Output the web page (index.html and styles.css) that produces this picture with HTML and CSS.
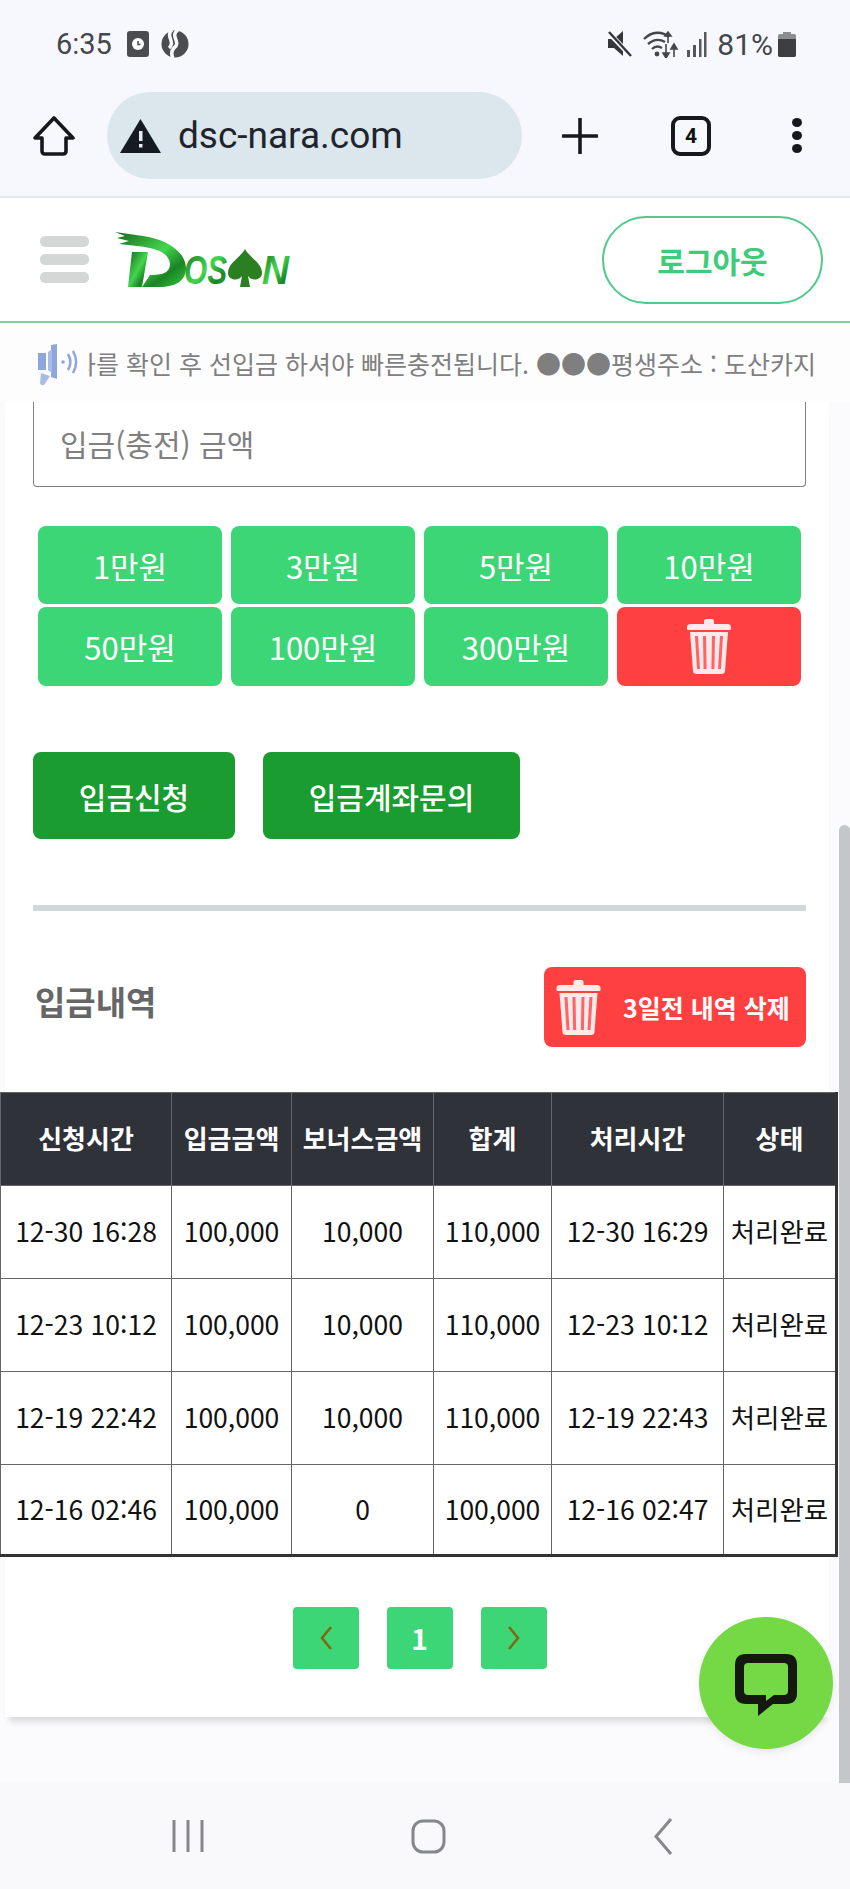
FILE: index.html
```html
<!DOCTYPE html>
<html lang="ko">
<head>
    <meta charset="UTF-8">
    <meta name="viewport" content="width=device-width, initial-scale=1.0">
    <title>입금신청 - DOSAN</title>
    <link rel="stylesheet" href="styles.css">
</head>
<body>
    <svg class="defs" width="0" height="0">
        <defs>
            <symbol id="trash" viewBox="0 0 44 55">
                <path fill="#ffe9e9" d="M17 2q0-2 2-2h6q2 0 2 2v3h13q4 0 4 3v2q0 1-1 1H1q-1 0-1-1V8q0-3 4-3h13z"/>
                <path fill="#ffe9e9" d="M3 13h38l-3 39q0 3-4 3H10q-4 0-4-3z"/>
                <path fill="#ff6365" d="M8 17h3l2 33h-3zM16 17h3l.6 33h-3zM25 17h3l-.6 33h-3zM33 17h3l-2 33h-3z"/>
            </symbol>
            <linearGradient id="logoGreen" x1="0" y1="0" x2="1" y2="1">
                <stop offset="0" stop-color="#17661a"/>
                <stop offset="0.5" stop-color="#43d64e"/>
                <stop offset="0.75" stop-color="#1a8424"/>
                <stop offset="1" stop-color="#35c83f"/>
            </linearGradient>
        </defs>
    </svg>

    <!-- Phone status bar -->
    <div class="status-bar">
        <span class="status-time">6:35</span>
        <svg class="ico-clock" width="22" height="26" viewBox="0 0 22 26"><rect width="22" height="26" rx="3" fill="#4a4c50"/><circle cx="11" cy="13" r="6" fill="#fff"/><path d="M11 10v3.5h2.5" stroke="#4a4c50" stroke-width="1.5" fill="none"/></svg>
        <svg class="ico-s" width="28" height="28" viewBox="0 0 28 28"><circle cx="14" cy="14" r="13.5" fill="#4a4c50"/><path d="M17 0C8 6 21 12 13 18c-3 3-3 6-1 10M11 0C4 6 15 12 8 18" stroke="#f7f8fe" stroke-width="3.5" fill="none"/></svg>
        <span class="status-gap"></span>
        <svg class="ico-mute" width="25" height="28" viewBox="0 0 25 28"><path d="M1 9h6l9-8v25l-9-8H1z" fill="#34363a"/><path d="M2 3l22 23" stroke="#f7f8fe" stroke-width="5"/><path d="M2 2l22 24" stroke="#34363a" stroke-width="2.5"/></svg>
        <svg class="ico-wifi" width="36" height="28" viewBox="0 0 36 28"><g fill="none" stroke="#44464a" stroke-width="2.4"><path d="M1 9c8-8 18-8 25-2"/><path d="M5 14c6-5 12-5 17-2"/><path d="M9 19c3-3 7-3 10-1"/></g><circle cx="14" cy="24" r="2.4" fill="#44464a"/><path d="M25 4v9M25 2l-3 4h6zM31 27v-11M31 14l-3 5h6zM23 14v12M23 28l-3-5h6z" stroke="#44464a" stroke-width="1.6" fill="#44464a"/></svg>
        <svg class="ico-signal" width="21" height="26" viewBox="0 0 21 26"><path d="M1 19h3v7H1zM7 14h3v12H7zM13 8h2.500v18H13zM18 1h2.500v25H18z" fill="#55575a"/></svg>
        <span class="status-batt">81%</span>
        <svg class="ico-batt" width="18" height="25" viewBox="0 0 18 25"><path d="M5 0h8v2h3q2 0 2 2v19q0 2-2 2H2q-2 0-2-2V4q0-2 2-2h3z" fill="#8b8d90"/><path d="M0 7h18v16q0 2-2 2H2q-2 0-2-2z" fill="#3c3e42"/></svg>
    </div>

    <!-- Browser toolbar -->
    <div class="toolbar">
        <svg class="ico-home" width="42" height="40" viewBox="0 0 42 40"><path d="M21 2L40 22h-7v13q0 3-3 3H12q-3 0-3-3V22H2z" fill="none" stroke="#16181d" stroke-width="3.6" stroke-linejoin="round"/></svg>
        <div class="url-bar">
            <svg class="ico-warn" width="41" height="34" viewBox="0 0 41 34"><path d="M20.500 0L41 34H0z" fill="#161a22"/><path d="M19 12h3.500v10H19zM19 25h3.500v3.500H19z" fill="#e6edf2"/></svg>
            <span class="url-text">dsc-nara.com</span>
        </div>
        <svg class="ico-plus" width="36" height="36" viewBox="0 0 36 36"><path d="M18 1v34M1 18h34" stroke="#16181d" stroke-width="3.6" stroke-linecap="round"/></svg>
        <div class="tab-count">4</div>
        <div class="dots"><i></i><i></i><i></i></div>
    </div>

    <!-- Site header -->
    <header class="site-header">
        <div class="burger"><i></i><i></i><i></i></div>
        <svg class="logo" width="176" height="58" viewBox="0 0 176 58">
            <path d="M0 1L28 5C48 8 70 18 71 37 71 50 60 56 45 56L27 56 35 44C47 44 55 42 55 33 54 22 42 17 22 15L4 13 14 10 2 7 10 5Z" fill="url(#logoGreen)"/>
            <path d="M17 21H33L27 56H13Z" fill="url(#logoGreen)"/>
            <text class="logo-text" x="69" y="53" textLength="43" lengthAdjust="spacingAndGlyphs">OS</text>
            <path d="M130 18c5 9 17 14 17 24 0 7-10 9-14 3l2 11h-10l2-11c-4 6-14 4-14-3 0-10 12-15 17-24z" fill="#2a7f20"/>
            <text class="logo-text" x="147" y="53" textLength="27" lengthAdjust="spacingAndGlyphs">N</text>
        </svg>
        <button class="logout">로그아웃</button>
    </header>

    <!-- Notice ticker -->
    <div class="ticker">
        <svg class="ico-speaker" width="44" height="42" viewBox="0 0 44 42"><path d="M2 9h8v17H2zM15 1l6-1v35l-6-2z" fill="#8ea6de"/><path d="M12 8l4-3v24l-4-3zM5 29l9 3-6 9q-3 1-4-2z" fill="#a9bbe6"/><circle cx="27" cy="18" r="1.800" fill="#8ea6de"/><path d="M32 10c3 5 3 11 0 16M37 7c4 7 4 15 0 22" stroke="#8ea6de" stroke-width="2.500" fill="none"/></svg>
        <div class="ticker-clip"><span class="ticker-text">좌를 확인 후 선입금 하셔야 빠른충전됩니다. ●●●평생주소 : 도산카지노</span></div>
    </div>

    <main class="page">
        <div class="card">
            <div class="amount-input">입금(충전) 금액</div>

            <div class="amount-grid">
                <button class="amount-btn">1만원</button>
                <button class="amount-btn">3만원</button>
                <button class="amount-btn">5만원</button>
                <button class="amount-btn">10만원</button>
                <button class="amount-btn">50만원</button>
                <button class="amount-btn">100만원</button>
                <button class="amount-btn">300만원</button>
                <button class="amount-btn amount-clear"><svg width="44" height="55"><use href="#trash"/></svg></button>
            </div>

            <div class="actions">
                <button class="action-btn apply">입금신청</button>
                <button class="action-btn inquiry">입금계좌문의</button>
            </div>

            <div class="divider"></div>

            <div class="history-head">
                <h2>입금내역</h2>
                <button class="delete-old"><svg width="45" height="55"><use href="#trash"/></svg><span>3일전 내역 삭제</span></button>
            </div>

            <table class="history">
                <thead>
                    <tr><th>신청시간</th><th>입금금액</th><th>보너스금액</th><th>합계</th><th>처리시간</th><th>상태</th></tr>
                </thead>
                <tbody>
                    <tr><td>12-30 16:28</td><td>100,000</td><td>10,000</td><td>110,000</td><td>12-30 16:29</td><td>처리완료</td></tr>
                    <tr><td>12-23 10:12</td><td>100,000</td><td>10,000</td><td>110,000</td><td>12-23 10:12</td><td>처리완료</td></tr>
                    <tr><td>12-19 22:42</td><td>100,000</td><td>10,000</td><td>110,000</td><td>12-19 22:43</td><td>처리완료</td></tr>
                    <tr><td>12-16 02:46</td><td>100,000</td><td>0</td><td>100,000</td><td>12-16 02:47</td><td>처리완료</td></tr>
                </tbody>
            </table>

            <div class="pager">
                <a class="page-btn"><svg width="14" height="26" viewBox="0 0 14 26"><path d="M12 2L3 13l9 11" fill="none" stroke="#7d6a12" stroke-width="2.600"/></svg></a>
                <a class="page-btn current">1</a>
                <a class="page-btn"><svg width="14" height="26" viewBox="0 0 14 26"><path d="M2 2l9 11-9 11" fill="none" stroke="#7d6a12" stroke-width="2.600"/></svg></a>
            </div>
        </div>

        <div class="scroll-thumb"></div>
        <div class="chat-fab">
            <svg width="64" height="64" viewBox="0 0 64 64"><path fill-rule="evenodd" fill="#14180f" d="M12 1h40q11 0 11 11v28q0 11-11 11H39L24 63V51H12Q1 51 1 40V12Q1 1 12 1zM14 10q-4 0-4 4v24q0 4 4 4h18v6l8-6h10q4 0 4-4V14q0-4-4-4z"/></svg>
        </div>
    </main>

    <!-- Phone navigation bar -->
    <div class="nav-bar">
        <svg width="32" height="34" viewBox="0 0 32 34"><path d="M2 1v32M16 1v32M30 1v32" stroke="#85878a" stroke-width="3"/></svg>
        <svg width="35" height="35" viewBox="0 0 35 35"><rect x="2" y="2" width="31" height="31" rx="10" fill="none" stroke="#85878a" stroke-width="3"/></svg>
        <svg width="20" height="37" viewBox="0 0 20 37"><path d="M18 1L3 18.500 18 36" fill="none" stroke="#85878a" stroke-width="3"/></svg>
    </div>
</body>
</html>
```

FILE: styles.css
```css
/* General Reset */
* {
    margin: 0;
    padding: 0;
    box-sizing: border-box;
}

body {
    width: 850px;
    height: 1889px;
    overflow: hidden;
    font-family: "Noto Sans CJK KR", "Noto Sans", sans-serif;
    background-color: #fff;
    color: #111;
}

button {
    font-family: inherit;
    border: none;
}

.defs {
    position: absolute;
}

/* Status bar */
.status-bar {
    display: flex;
    align-items: center;
    height: 75px;
    padding: 13px 54px 0 56px;
    background: #f7f8fe;
    font-family: Roboto, sans-serif;
    color: #44464a;
}

.status-time {
    font-size: 29px;
}

.ico-clock {
    margin-left: 15px;
}

.ico-s {
    margin-left: 12px;
}

.status-gap {
    flex: 1;
}

.ico-wifi {
    margin-left: 11px;
}

.ico-signal {
    margin-left: 7px;
}

.status-batt {
    margin-left: 10px;
    font-size: 30px;
}

.ico-batt {
    margin-left: 5px;
}

/* Browser toolbar */
.toolbar {
    display: flex;
    align-items: center;
    height: 123px;
    padding-left: 33px;
    background: #f7f8fe;
    border-bottom: 2px solid #e3e6ed;
}

.url-bar {
    display: flex;
    align-items: center;
    width: 415px;
    height: 87px;
    margin-left: 32px;
    padding-left: 13px;
    background: #dce7ed;
    border-radius: 44px;
}

.url-text {
    margin-left: 17px;
    font-family: Roboto, sans-serif;
    font-size: 37px;
    color: #20242c;
}

.ico-plus {
    margin-left: 40px;
}

.tab-count {
    width: 40px;
    height: 40px;
    margin-left: 73px;
    border: 4px solid #16181d;
    border-radius: 9px;
    font-family: Roboto, sans-serif;
    font-size: 21px;
    font-weight: 700;
    line-height: 32px;
    text-align: center;
}

.dots {
    display: flex;
    flex-direction: column;
    gap: 4px;
    margin-left: 81px;
}

.dots i {
    display: block;
    width: 10px;
    height: 9px;
    border-radius: 50%;
    background: #16181d;
}

/* Site header */
.site-header {
    display: flex;
    align-items: center;
    height: 125px;
    padding: 0 27px 0 40px;
    background: #fff;
    border-bottom: 2px solid #7dd3a0;
}

.burger {
    display: flex;
    flex-direction: column;
    gap: 7px;
}

.burger i {
    display: block;
    width: 49px;
    height: 11px;
    border-radius: 5px;
    background: #d5d6d6;
}

.logo {
    margin-left: 26px;
}

.logo-text {
    font-family: "Liberation Sans", sans-serif;
    font-size: 40px;
    font-weight: 700;
    font-style: italic;
    fill: url(#logoGreen);
}

.logout {
    width: 221px;
    height: 88px;
    margin-left: auto;
    background: #fff;
    border: 2px solid #52c98a;
    border-radius: 44px;
    color: #3ecb7a;
    font-size: 30px;
    font-weight: 700;
}

/* Notice ticker */
.ticker {
    display: flex;
    align-items: center;
    height: 79px;
    padding: 0 35px 0 36px;
    background: #fdfdfe;
}

.ico-speaker {
    margin-top: 4px;
}

.ticker-clip {
    flex: 1;
    margin-left: 8px;
    overflow: hidden;
    white-space: nowrap;
}

.ticker-text {
    display: inline-block;
    margin-left: -15px;
    font-size: 25px;
    color: #7f7f7f;
}

/* Scrolled page */
.page {
    position: relative;
    height: 1381px;
    overflow: hidden;
    background: #fbfbfd;
}

.card {
    width: 824px;
    height: 1315px;
    margin-left: 5px;
    padding: 0 23px 0 28px;
    background: #fff;
    box-shadow: 0 9px 6px -4px rgba(0, 0, 0, 0.12);
}

.amount-input {
    height: 85px;
    padding-left: 26px;
    background: #fff;
    border: 1px solid #808080;
    border-top: none;
    border-radius: 0 0 4px 4px;
    font-size: 30px;
    line-height: 82px;
    color: #808080;
}

.amount-grid {
    display: grid;
    grid-template-columns: repeat(4, 184px);
    grid-template-rows: 78px 79px;
    gap: 3px 9px;
    margin-top: 39px;
    padding: 0 5px;
}

.amount-btn {
    background: #3dd676;
    border-radius: 8px;
    color: #fff;
    font-size: 31px;
}

.amount-clear {
    display: flex;
    align-items: center;
    justify-content: center;
    background: #ff4040;
}

.actions {
    display: flex;
    gap: 28px;
    margin-top: 66px;
}

.action-btn {
    height: 87px;
    background: #1b9c30;
    border-radius: 8px;
    color: #fff;
    font-size: 30px;
    font-weight: 500;
}

.apply {
    width: 202px;
}

.inquiry {
    width: 257px;
}

.divider {
    height: 6px;
    margin-top: 66px;
    background: #d0d8de;
}

.history-head {
    display: flex;
    justify-content: space-between;
    margin-top: 56px;
}

.history-head h2 {
    margin: 12px 0 0 2px;
    font-size: 33px;
    font-weight: 700;
    line-height: 44px;
    color: #666;
}

.delete-old {
    display: flex;
    align-items: center;
    width: 262px;
    height: 80px;
    padding-left: 12px;
    background: #ff4040;
    border-radius: 8px;
    color: #fff;
    font-size: 25px;
    font-weight: 700;
}

.delete-old span {
    margin-left: 22px;
    white-space: nowrap;
}

/* History table */
.history {
    width: 838px;
    margin: 45px 0 0 -33px;
    table-layout: fixed;
    border-collapse: collapse;
    border-left: 1px solid #333;
    border-right: 3px solid #333;
    border-bottom: 3px solid #333;
}

.history th,
.history td {
    padding-bottom: 3px;
    border: 1px solid #666;
    text-align: center;
    white-space: nowrap;
    overflow: hidden;
}

.history th {
    height: 93px;
    background: #30323a;
    color: #fff;
    font-size: 26px;
    font-weight: 700;
}

.history td {
    height: 93px;
    background: #fff;
    font-size: 26.5px;
    color: #111;
}

.history tr:last-child td {
    height: 91px;
    border-bottom: 3px solid #333;
}

.history th:nth-child(1) { width: 171px; }
.history th:nth-child(2) { width: 120px; }
.history th:nth-child(3) { width: 142px; }
.history th:nth-child(4) { width: 118px; }
.history th:nth-child(5) { width: 172px; }

/* Pagination */
.pager {
    display: flex;
    justify-content: center;
    gap: 28px;
    margin-top: 50px;
}

.page-btn {
    display: flex;
    align-items: center;
    justify-content: center;
    width: 66px;
    height: 62px;
    background: #3dd676;
    border-radius: 4px;
}

.current {
    color: #fff;
    font-size: 28px;
    font-weight: 700;
}

/* Overlays */
.scroll-thumb {
    position: absolute;
    top: 423px;
    right: 0;
    width: 11px;
    height: 958px;
    background: #c4c6c9;
    border-radius: 6px 6px 0 0;
}

.chat-fab {
    position: absolute;
    top: 1215px;
    left: 699px;
    display: flex;
    align-items: center;
    justify-content: center;
    width: 134px;
    height: 132px;
    padding-top: 3px;
    background: #74d944;
    border-radius: 50%;
    box-shadow: 0 3px 8px rgba(0, 0, 0, 0.08);
}

/* Phone navigation bar */
.nav-bar {
    display: flex;
    align-items: center;
    justify-content: space-between;
    height: 106px;
    padding: 0 177px 0 172px;
    background: #f9f9fb;
}
```
